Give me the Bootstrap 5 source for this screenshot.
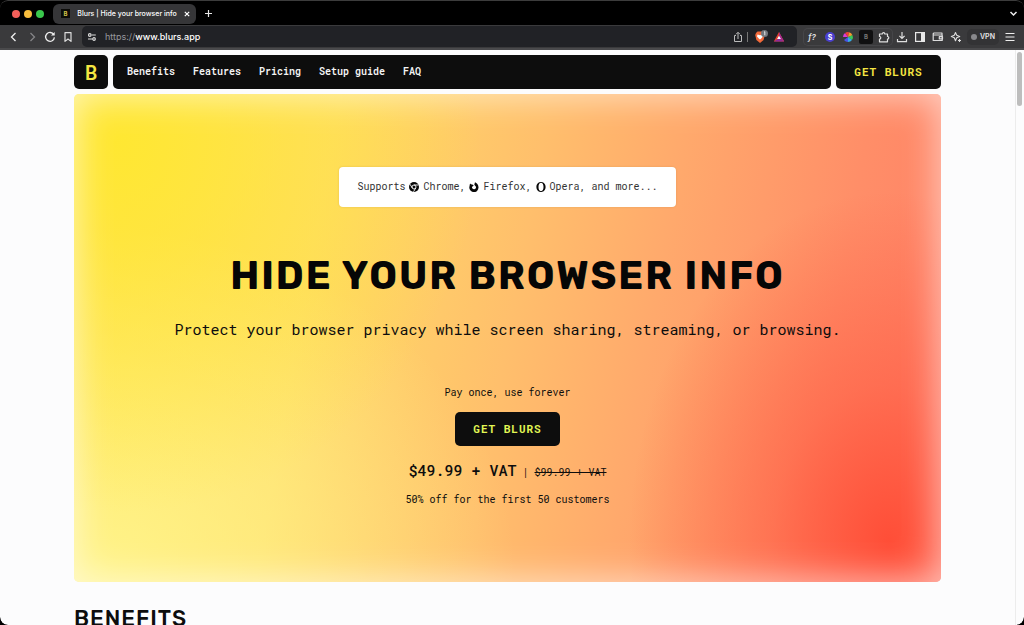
<!DOCTYPE html>
<html lang="en">
<head>
<meta charset="utf-8">
<meta name="viewport" content="width=device-width, initial-scale=1">
<title>Blurs | Hide your browser info</title>
<link href="https://cdn.jsdelivr.net/npm/bootstrap@5.3.0/dist/css/bootstrap.min.css" rel="stylesheet">
<style>
  :root { --ink: #0d0d0d; --mono: "Roboto Mono", "DejaVu Sans Mono", monospace; --sans: Inter, Roboto, sans-serif; }
  body { background: #000; font-family: var(--mono); font-size: 10px; line-height: 16px; color: var(--ink); }
  button { border: 0; background: none; padding: 0; color: inherit; }
  svg { display: block; }
  .window { height: 100vh; overflow: hidden; border-radius: 8px; }
  /* browser chrome */
  .chrome-ui { font-family: var(--sans); font-size: 8px; line-height: 12px; color: #e4e4e6; }
  .tabstrip { height: 25px; padding: 3px 6px 2px 12px; background: #000; border-top: 1px solid #3c3c3c; border-radius: 8px 8px 0 0; }
  .lights { gap: 4px; }
  .light { width: 8px; height: 8px; border-radius: 50%; }
  .light-close { background: #f4605a; }
  .light-min { background: #f8be3d; }
  .light-max { background: #3ac84c; }
  .page-tab { width: 143px; height: 20px; padding: 0 6px 0 8px; border-radius: 6px; background: #363638; margin-left: 9px; color: #fff; font-size: 7px; font-weight: 500; }
  .favicon { width: 9px; height: 9px; background: #0b0b08; color: #cfc04a; font: bold 6px/9px var(--sans); text-align: center; }
  .toolbar { height: 25px; padding: 0 5px; background: #3a3a3c; border-bottom: 2px solid #4a4a4c; }
  .tool { width: 18px; height: 20px; display: flex; align-items: center; justify-content: center; flex: none; }
  .address { height: 21px; background: #212226; border-radius: 5px; margin-left: 5px; padding-left: 1px; padding-right: 9px; }
  .divider { width: 1px; height: 10px; background: #777; }
  .scheme { color: #98989d; font-weight: 400; }
  .url { font-size: 9px; font-weight: 500; }
  .exts { box-shadow: inset 0 0 0 1px #464649; border-radius: 5px; height: 18px; margin: 0 0 0 6px; }
  .fx { font-weight: 600; font-size: 8px; }
  .vpn { background: #333335; border-radius: 5px; height: 16px; width: 32px; margin: 0 2px; gap: 3px; font-size: 7px; font-weight: 600; }
  /* page */
  .site { background: #fcfcfd; border-radius: 0 0 8px 8px; }
  .scroll-track { width: 9px; border-left: 1px solid #ececec; padding: 2px 1px; }
  .scroll-thumb { width: 5px; height: 54px; border-radius: 3px; background: #bdbdbd; }
  .shell { max-width: 867px; padding-top: 5px; }
  .site-nav { gap: 5px; }
  .tile { background: var(--ink); border-radius: 5px; height: 34px; }
  .brand { width: 34px; color: #f5e642; font-size: 20px; font-weight: 600; text-decoration: none; }
  .menu-bar { padding: 0 14px; gap: 18px; }
  .menu-bar a { color: #f4f4f4; text-decoration: none; font-weight: 600; }
  .cta { width: 105px; color: #f5e642; font-size: 11px; font-weight: 700; letter-spacing: 1px; text-transform: uppercase; }
  .cta-lime { color: #e2f754; }
  .hero { height: 488px; margin-top: 5px; padding-top: 73px; border-radius: 5px; text-align: center;
    background:
      radial-gradient(ellipse 42% 76% at 5% 10%, rgba(255,232,44,.85) 0%, rgba(255,232,44,.4) 45%, rgba(255,232,44,0) 100%),
      radial-gradient(ellipse 30% 72% at 94% 92%, rgba(255,72,50,.9) 0%, rgba(255,78,56,.45) 45%, rgba(255,90,64,0) 100%),
      radial-gradient(ellipse 48% 70% at 3% 97%, rgba(255,248,150,.8) 0%, rgba(255,240,140,0) 100%),
      linear-gradient(100deg, #ffe450 0%, #ffdc66 28%, #ffbf6c 50%, #ffa96c 65%, #ff8e68 84%, #ff7e66 100%);
    box-shadow: inset 0 0 36px 2px rgba(255,255,255,.62); }
  .supports { background: #fff; border-radius: 4px; height: 40px; padding: 0 18px; box-shadow: 0 0 2px rgba(160,120,40,.3); color: #333; gap: 4px; }
  .hero h1 { font-family: Rubik, Inter, sans-serif; font-weight: 700; font-size: 39px; line-height: 48px; letter-spacing: 2px; margin: 45px 0 0; color: #060606; }
  .tagline { font-size: 15px; line-height: 24px; margin: 17px 0 0; }
  .once { margin: 44px 0 11px; }
  .price { font-size: 15px; line-height: 24px; font-weight: 500; }
  .prices { margin-top: 12px; gap: 6px; }
  .offer { margin: 10px 0 0; }
  .section-title { font-family: Rubik, Inter, sans-serif; font-size: 22px; line-height: 28px; font-weight: 500; letter-spacing: 1px; margin: 23px 0 0; }
</style>
</head>
<body>
<div class="window d-flex flex-column">
  <header class="chrome-ui flex-shrink-0">
    <div class="tabstrip d-flex align-items-center">
      <div class="lights d-flex">
        <span class="light light-close"></span>
        <span class="light light-min"></span>
        <span class="light light-max"></span>
      </div>
      <div class="page-tab d-flex align-items-center justify-content-between">
        <span class="favicon">B</span><span class="text-nowrap">Blurs | Hide your browser info</span>
        <button aria-label="Close tab"><svg width="6" height="6" viewBox="0 0 6 6" stroke="#fff" stroke-width="1.2"><path d="M.8.8l4.400 4.400M5.200.8L.8 5.200"/></svg></button>
      </div>
      <button class="ms-2" aria-label="New tab"><svg width="9" height="9" viewBox="0 0 9 9" stroke="#e8e8e8" stroke-width="1.200"><path d="M4.500 1v7M1 4.500h7"/></svg></button>
      <button class="ms-auto" aria-label="Search tabs"><svg width="9" height="9" viewBox="0 0 9 9" fill="none" stroke="#eee" stroke-width="1.500"><path d="M1.500 3l3 3 3-3"/></svg></button>
    </div>
    <div class="toolbar d-flex align-items-center">
      <button class="tool" aria-label="Back"><svg width="10" height="12" viewBox="0 0 10 12" fill="none" stroke="#f0f0f0" stroke-width="1.300"><path d="M6.500 2L2.500 6l4 4"/></svg></button>
      <button class="tool" aria-label="Forward"><svg width="10" height="12" viewBox="0 0 10 12" fill="none" stroke="#858588" stroke-width="1.300"><path d="M3.500 2l4 4-4 4"/></svg></button>
      <button class="tool" aria-label="Reload"><svg width="12" height="12" viewBox="0 0 12 12" fill="none" stroke="#eee" stroke-width="1.300"><path d="M9.800 3.600A4.400 4.400 0 1 0 10.400 6.400"/><path d="M7 4.600h3.700V1z" fill="#eee" stroke="none"/></svg></button>
      <button class="tool" aria-label="Bookmark"><svg width="10" height="12" viewBox="0 0 10 12" fill="none" stroke="#ddd" stroke-width="1.200" stroke-linejoin="round"><path d="M2 1.600h6v8.800L5 8l-3 2.400z"/></svg></button>
      <div class="address d-flex align-items-center flex-grow-1">
        <button class="tool" aria-label="Site settings"><svg width="10" height="10" viewBox="0 0 10 10" fill="none" stroke="#ddd" stroke-width="1.200"><circle cx="2.800" cy="3" r="1.300"/><path d="M4.800 3h4M1 7h4"/><circle cx="7" cy="7" r="1.300"/></svg></button>
        <a href="#" class="url text-decoration-none text-white ms-1 flex-grow-1"><span class="scheme">https://</span>www.blurs.app</a>
        <button class="tool" aria-label="Share"><svg width="10" height="12" viewBox="0 0 10 12" fill="none" stroke="#bbb"><path d="M3 4.500H1.500v6h7v-6H7M5 8V1.500M3 3.300l2-2 2 2"/></svg></button>
        <span class="divider"></span>
        <button class="tool ms-1" aria-label="Brave Shields"><svg width="16" height="16" viewBox="0 0 16 16"><path d="M3 4l1.500-1.500h5L11 4l.8 2-1.200 5L7 14l-3.600-3-1.200-5z" fill="#f2693a"/><path d="M4.500 5.500L7 6.200l2.500-.7.5 2-1.800 2-1.200.9-1.200-.9-1.800-2z" fill="#fff"/><circle cx="11.500" cy="4.500" r="3.500" fill="#74777c"/><path d="M11 3.200l.8-.5v3.600" fill="none" stroke="#fff" stroke-width=".8"/></svg></button>
        <button class="tool" aria-label="Rewards"><svg width="12" height="12" viewBox="0 0 12 12"><path d="M6 1l5.200 9.500H.8z" fill="#e0432f"/><path d="M6 1l5.200 9.500L6 7.500z" fill="#a32a91"/><path d="M.8 10.500L6 7.500l5.200 3z" fill="#8a2a9c"/><path d="M6 4.800l1.900 3.300H4.100z" fill="#fff"/></svg></button>
      </div>
      <div class="exts d-flex align-items-center">
        <button class="tool" aria-label="Font finder"><em class="fx">f?</em></button>
        <button class="tool" aria-label="S extension"><svg width="12" height="12" viewBox="0 0 12 12"><circle cx="6" cy="6" r="5" fill="#4a3fd0"/><text x="6" y="8.500" text-anchor="middle" font-size="7" font-weight="700" fill="#fff">S</text></svg></button>
        <button class="tool" aria-label="Colour picker"><svg width="12" height="12" viewBox="0 0 12 12"><path d="M6 6L1 6a5 5 0 0 1 2-4z" fill="#d83bd8"/><path d="M6 6L3 2a5 5 0 0 1 4-.8z" fill="#ee3d3d"/><path d="M6 6l1-4.800a5 5 0 0 1 3.500 3z" fill="#f39a2d"/><path d="M6 6l4.500-1.800a5 5 0 0 1-.5 4.800z" fill="#3bc85a"/><path d="M6 6l4 3a5 5 0 0 1-4 2z" fill="#35aee8"/><path d="M6 6v5a5 5 0 0 1-4-2z" fill="#4855e8"/></svg></button>
        <button class="tool" aria-label="Blurs"><svg width="14" height="14" viewBox="0 0 14 14"><rect width="14" height="14" rx="2" fill="#101011"/><text x="7" y="9" text-anchor="middle" font-size="6" font-weight="700" fill="#777">B</text></svg></button>
        <button class="tool" aria-label="Extensions"><svg width="12" height="12" viewBox="0 0 12 12" fill="none" stroke="#e0e0e0" stroke-width="1.200" stroke-linejoin="round"><path d="M1.500 3h2.700a1.300 1.300 0 1 1 2.600 0h2.700v2.500a1.300 1.300 0 1 1 0 2.600v2.700h-8V8.100a1.300 1.300 0 1 0 0-2.600z"/></svg></button>
      </div>
      <button class="tool" aria-label="Downloads"><svg width="12" height="12" viewBox="0 0 12 12" fill="none" stroke="#e0e0e0" stroke-width="1.200"><path d="M6 1v6M3.400 4.800L6 7.400l2.600-2.600M1.500 8v2.700h9V8"/></svg></button>
      <button class="tool" aria-label="Side panel"><svg width="12" height="12" viewBox="0 0 12 12"><rect x="1.600" y="1.600" width="8.800" height="8.800" fill="none" stroke="#e8e8e8" stroke-width="1.200"/><path d="M7 1.500h3.500v9H7z" fill="#e8e8e8"/></svg></button>
      <button class="tool" aria-label="Wallet"><svg width="12" height="12" viewBox="0 0 12 12" fill="none" stroke="#ddd" stroke-width="1.200" stroke-linejoin="round"><path d="M10 4V2H2.200a1 1 0 0 0-1 1v6.500h9V4H1.500M10.500 5.700H7.300v2.200h3.200z"/></svg></button>
      <button class="tool" aria-label="Leo AI"><svg width="12" height="12" viewBox="0 0 12 12" fill="none" stroke="#ddd" stroke-width="1.100" stroke-linejoin="round"><path d="M5.500 1.500l1.200 2.800 3 1.200-3 1.200-1.200 3-1.200-3-3-1.200 3-1.200z"/><path d="M9.500 8v3M8 9.500h3"/></svg></button>
      <button class="vpn d-flex align-items-center justify-content-center"><svg width="6" height="6" viewBox="0 0 6 6"><circle cx="3" cy="3" r="3" fill="#88888c"/></svg>VPN</button>
      <button class="tool" aria-label="Menu"><svg width="10" height="10" viewBox="0 0 10 10" stroke="#eee" stroke-width="1.200"><path d="M.5 1.500h9M.5 5h9M.5 8.500h9"/></svg></button>
    </div>
  </header>

  <div class="site d-flex flex-grow-1 overflow-hidden">
    <main class="flex-grow-1">
      <div class="shell mx-auto">
        <nav class="site-nav d-flex" aria-label="Main">
          <a href="#" class="tile brand d-flex align-items-center justify-content-center">B</a>
          <div class="tile menu-bar flex-grow-1 d-flex align-items-center">
            <a href="#">Benefits</a><a href="#">Features</a><a href="#">Pricing</a><a href="#">Setup guide</a><a href="#">FAQ</a>
          </div>
          <button class="tile cta">Get Blurs</button>
        </nav>
        <section class="hero">
          <div class="supports d-inline-flex align-items-center">
            <span>Supports</span>
            <svg width="10" height="10" viewBox="0 0 10 10"><circle cx="5" cy="5" r="5" fill="#080808"/><circle cx="5" cy="5" r="2" fill="none" stroke="#fff" stroke-width=".9"/><path d="M5 3h4.500M3.300 6L1 2.200M6.700 6L4.500 9.800" stroke="#fff" stroke-width=".9"/></svg>
            <span>Chrome,</span>
            <svg width="10" height="10" viewBox="0 0 10 10"><path d="M1 1.500l1.300 1 .8-.3.700.9 1 .3-.9.900-.8.400A2 2 0 1 0 6.800 4.400L5.300 2.800 6 .3c1.700.7 3.500 2.400 3.500 5A4.600 4.600 0 1 1 .5 4.200z" fill="#080808"/></svg>
            <span>Firefox,</span>
            <svg width="10" height="10" viewBox="0 0 10 10"><path fill="#080808" fill-rule="evenodd" d="M5 0C7.800 0 9.600 2.200 9.600 5S7.800 10 5 10 .4 7.800.4 5 2.200 0 5 0zm0 .8C3.400.8 2.500 2.700 2.500 5S3.400 9.200 5 9.200 7.500 7.300 7.500 5 6.600.8 5 .8z"/></svg>
            <span>Opera, and more...</span>
          </div>
          <h1>HIDE YOUR BROWSER INFO</h1>
          <p class="tagline">Protect your browser privacy while screen sharing, streaming, or browsing.</p>
          <p class="once">Pay once, use forever</p>
          <button class="tile cta cta-lime">Get Blurs</button>
          <div class="prices d-flex justify-content-center align-items-baseline"><span class="price">$49.99 + VAT</span><span>|</span><s>$99.99 + VAT</s></div>
          <p class="offer">50% off for the first 50 customers</p>
        </section>
        <h2 class="section-title">BENEFITS</h2>
      </div>
    </main>
    <div class="scroll-track flex-shrink-0"><div class="scroll-thumb"></div></div>
  </div>
</div>
<script src="https://cdn.jsdelivr.net/npm/bootstrap@5.3.0/dist/js/bootstrap.bundle.min.js"></script>
</body>
</html>
